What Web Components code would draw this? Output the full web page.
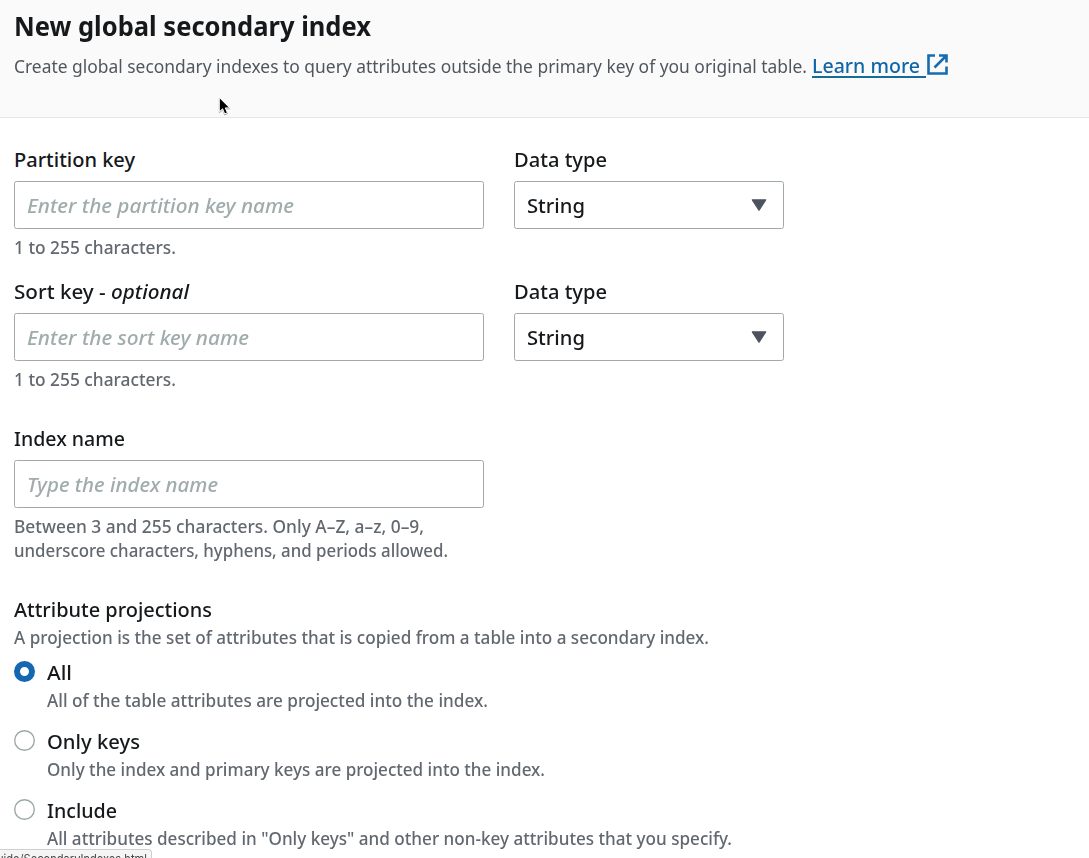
<!DOCTYPE html>
<html lang="en">
<head>
<meta charset="utf-8">
<title>New global secondary index</title>
<style>
html,body{margin:0;height:100%;overflow:hidden;background:#fff}
body{font-family:"Noto Sans","Open Sans",sans-serif;color:#16191b}
</style>
</head>
<body>
<index-page></index-page>
<script>
const define=(name,html,setup)=>customElements.define(name,class extends HTMLElement{
  constructor(){super();this.attachShadow({mode:'open'}).innerHTML=html;}
  connectedCallback(){if(setup)setup(this,this.shadowRoot);}
});

/* One line of type, condensed horizontally to its measure (w). */
define('type-line',`<style>
:host{display:block;white-space:nowrap}
span{display:inline-block;transform-origin:0 50%}
</style><span><slot></slot></span>`,(el,root)=>{
  const w=+el.getAttribute('w'),s=root.querySelector('span');
  el.style.width=w+'px';
  s.style.transform='scaleX('+(w/s.getBoundingClientRect().width)+')';
});

define('page-header',`<style>
:host{display:block;box-sizing:border-box;height:118px;padding:9px 14px 0;background:#fafafa;border-bottom:1px solid #e6e8e8}
.title{font-size:26px;line-height:34px;font-weight:700}
.row{display:flex;align-items:baseline;margin-top:9px;gap:5px;font-size:18px;line-height:28px;font-weight:450;color:#50565d}
</style><div class="title"><slot name="title"></slot></div><div class="row"><slot></slot></div>`);

define('external-link',`<style>
:host{display:flex;align-items:baseline;color:#0f66a9;font-size:20px;font-weight:500}
a{display:block;width:114px;height:21px;line-height:22px;border-bottom:2px solid #176b97}
svg{align-self:center;margin:-4px 0 0 0}
</style><a><slot></slot></a><svg width="23" height="23" viewBox="0 0 23 23" fill="none" stroke="#156cb1" stroke-width="2.6"><path d="M9 2.5H2.5V20.5H20.5V13.5M13 2.5H20.5V9.5M20 3L8.5 14.5"/></svg>`);

define('form-field',`<style>
:host{display:block;width:var(--field-width,470px)}
.label{padding-top:1px;font-size:20px;line-height:26px;font-weight:500}
.control{margin-top:8px}
.hint{margin-top:6px;font-size:18px;line-height:24px;font-weight:540;color:#62686f}
</style><div class="label"><slot name="label"></slot></div><div class="control"><slot></slot></div><div class="hint"><slot name="hint"></slot></div>`);

define('text-box',`<style>
:host{display:flex;align-items:center;box-sizing:border-box;height:48px;padding:0 12px;border:1px solid #a2a9aa;border-radius:2.5px;background:#fff;color:#a0acac;font-size:20px;font-style:italic;font-weight:500}
</style><slot></slot>`);

define('select-box',`<style>
:host{display:flex;align-items:center;justify-content:space-between;box-sizing:border-box;height:48px;padding:0 16px 0 12px;border:1px solid #a2a9aa;border-radius:2.5px;background:#fff;font-size:20px;font-weight:500}
</style><slot></slot><svg width="16" height="13" viewBox="0 0 16 13"><path d="M1 .8H15L8 11.6Z" fill="#4d535e" stroke="#4d535e" stroke-width="1" stroke-linejoin="round"/></svg>`);

define('radio-option',`<style>
:host{display:grid;grid-template-columns:33px 1fr;height:69px;align-items:start}
.dot{box-sizing:border-box;width:21px;height:21px;border-radius:50%;margin-top:2px;background:#fff;box-shadow:inset 0 0 0 1.4px #9da8a9}
:host([checked]) .dot{box-shadow:none;border:6.2px solid #1567b2}
.label{padding-top:1px;font-size:20px;line-height:26px;font-weight:500}
.text{margin-top:2px;font-size:18px;line-height:24px;font-weight:540;color:#62686f}
</style><div class="dot"></div><div><div class="label"><slot name="label"></slot></div><div class="text"><slot></slot></div></div>`);

define('status-bar',`<style>
:host{position:absolute;left:0;top:849px;box-sizing:border-box;width:152px;height:9px;overflow:hidden;display:flex;justify-content:flex-end;padding-right:4px;background:#f5f5f5;border:1px solid #cfcfcf;border-left:0;border-bottom:0;border-radius:0 4px 0 0;font:12px/17px "Inter","Liberation Sans",sans-serif;color:#444;white-space:nowrap}
</style><slot></slot>`);

define('mouse-pointer',`<style>
:host{position:absolute;left:217px;top:96px;width:14px;height:20px}
svg{display:block;filter:drop-shadow(0 1px .7px #0005)}
</style><svg width="14" height="20" viewBox="0 0 14 20"><path d="M2.3 1.5V15.8L5.6 12.8L7.7 17.9L10.4 16.8L8.3 11.9H12.7Z" fill="#000" stroke="#fff" stroke-width="1"/></svg>`);

define('index-page',`<style>
:host{display:block;height:100vh;overflow:hidden}
main{padding:28px 14px 0;display:flex;flex-direction:column}
.pair{display:flex;gap:30px;margin-bottom:19px}
.small{--field-width:270px}
.name{margin-top:15px}
.projections{margin-top:34px}
.heading{padding-top:1px;font-size:20px;line-height:26px;font-weight:500}
.about{margin:2px 0 10px;font-size:18px;line-height:24px;font-weight:540;color:#62686f}
em{font-style:italic}
</style>
<page-header><type-line slot="title" w="357">New global secondary index</type-line>
<type-line w="793">Create global secondary indexes to query attributes outside the primary key of you original table.</type-line>
<external-link><type-line w="108">Learn more</type-line></external-link></page-header>
<main>
<div class="pair">
<form-field><type-line slot="label" w="121">Partition key</type-line><text-box><type-line w="267">Enter the partition key name</type-line></text-box><type-line slot="hint" w="162">1 to 255 characters.</type-line></form-field>
<form-field class="small"><type-line slot="label" w="93">Data type</type-line><select-box><type-line w="58">String</type-line></select-box></form-field>
</div>
<div class="pair">
<form-field><type-line slot="label" w="175">Sort key - <em>optional</em></type-line><text-box><type-line w="222">Enter the sort key name</type-line></text-box><type-line slot="hint" w="162">1 to 255 characters.</type-line></form-field>
<form-field class="small"><type-line slot="label" w="93">Data type</type-line><select-box><type-line w="58">String</type-line></select-box></form-field>
</div>
<form-field class="name"><type-line slot="label" w="111">Index name</type-line><text-box><type-line w="191">Type the index name</type-line></text-box><type-line slot="hint" w="410">Between 3 and 255 characters. Only A–Z, a–z, 0–9,</type-line><type-line slot="hint" w="434">underscore characters, hyphens, and periods allowed.</type-line></form-field>
<section class="projections">
<div class="heading"><type-line w="198">Attribute projections</type-line></div>
<div class="about"><type-line w="695">A projection is the set of attributes that is copied from a table into a secondary index.</type-line></div>
<radio-option checked><type-line slot="label" w="25">All</type-line><type-line w="441">All of the table attributes are projected into the index.</type-line></radio-option>
<radio-option><type-line slot="label" w="93">Only keys</type-line><type-line w="498">Only the index and primary keys are projected into the index.</type-line></radio-option>
<radio-option><type-line slot="label" w="70">Include</type-line><type-line w="685">All attributes described in "Only keys" and other non-key attributes that you specify.</type-line></radio-option>
</section>
</main>
<status-bar><type-line w="150">uide/SecondaryIndexes.html</type-line></status-bar>
<mouse-pointer></mouse-pointer>`);
</script>
</body>
</html>
